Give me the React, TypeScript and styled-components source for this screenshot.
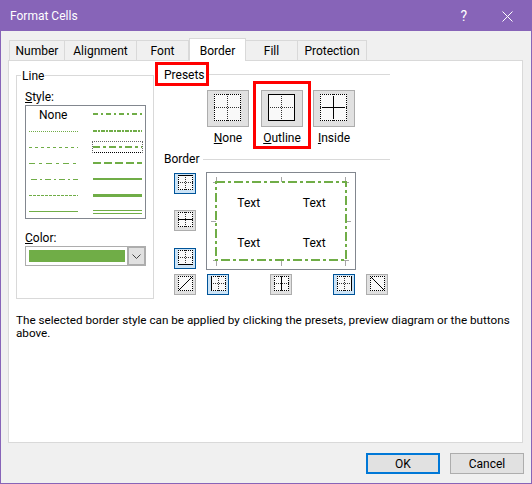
import type { ReactNode } from 'react'
import styled, { createGlobalStyle } from 'styled-components'

const GREEN = '#70ad47'

const Global = createGlobalStyle`
  html, body { margin: 0; padding: 0; background: #f0f0f0; }
  body { font-family: Roboto, "Noto Sans", sans-serif; font-size: 12px; color: #000; }
`

// a dash pattern per row of the style list: [pattern, thickness]
const leftLines: [string, number][] = [
  ['1 1', 1],
  ['3 3', 1],
  ['6 4 3 4', 1],
  ['6 3 2 3', 1],
  ['3 1', 1],
  ['', 1],
]
const rightLines: [string, number][] = [
  ['5 3 2 3', 2],
  ['4 1 2 1', 2],
  ['7 3 3 3', 2],
  ['8 3', 2],
  ['', 2],
  ['', 3],
]

const TABS = [
  { label: 'Number', width: 56 },
  { label: 'Alignment', width: 72 },
  { label: 'Font', width: 52 },
  { label: 'Border', width: 57, active: true },
  { label: 'Fill', width: 52 },
  { label: 'Protection', width: 69 },
]

const Under = ({ c }: { c: string }) => <u>{c}</u>

const LineSample = ({ dash, weight, inset = 0 }: { dash: string; weight: number; inset?: number }) => {
  const y = weight % 2 ? 3.5 : 3
  return (
    <svg width="49" height="6">
      <line x1={inset} y1={y} x2="49" y2={y} stroke={GREEN} strokeWidth={weight} strokeDasharray={dash} />
    </svg>
  )
}

// one pixel dots, every other pixel, so nothing gets smeared by dash rendering
const dotsAcross = (y: number, size: number) => {
  let d = ''
  for (let i = 0; i < size; i += 2) d += `M${i} ${y + 0.5}h1`
  return d
}
const dotsDown = (x: number, size: number) => {
  let d = ''
  for (let i = 0; i < size; i += 2) d += `M${x} ${i}h1v1h-1z`
  return d
}

// the little dotted cell picture on each border button; children are the solid strokes
const CellIcon = ({ size, plain, children }: { size: number; plain?: boolean; children?: ReactNode }) => {
  const last = size - 1
  const mid = Math.floor(size / 2)
  return (
    <svg width={size} height={size}>
      <rect x="0" y="0" width={size} height={size} fill="#f9f9f9" />
      <path d={dotsAcross(0, size) + dotsAcross(last, size)} stroke="#000" fill="none" />
      <path d={dotsDown(0, size) + dotsDown(last, size)} fill="#000" />
      {!plain && <path d={dotsAcross(mid, size)} stroke="#333" fill="none" />}
      {!plain && <path d={dotsDown(mid, size)} fill="#333" />}
      <g stroke="#000" strokeWidth="1" fill="none">
        {children}
      </g>
    </svg>
  )
}

const Tick = styled.i<{ $x: number; $y: number; $w: number; $h: number }>`
  position: absolute;
  left: ${p => p.$x}px;
  top: ${p => p.$y}px;
  width: ${p => p.$w}px;
  height: ${p => p.$h}px;
  background: #a6a6a6;
`

export default function App() {
  return (
    <Win>
      <Global />
      <TitleBar>
        <span>Format Cells</span>
        <TitleIcons>
          <HelpMark>?</HelpMark>
          <svg width="11" height="11">
            <path d="M0.5 0.5L10.5 10.5M10.5 0.5L0.5 10.5" stroke="#fff" fill="none" />
          </svg>
        </TitleIcons>
      </TitleBar>
      <Body>
        <Tabs>
          {TABS.map(t => (
            <Tab key={t.label} $active={t.active} $w={t.width}>
              {t.label}
            </Tab>
          ))}
        </Tabs>
        <Panel>
          <Columns>
            <LineGroup>
              <Legend>Line</Legend>
              <FieldLabel>
                <Under c="S" />tyle:
              </FieldLabel>
              <StyleList>
                <StyleColumn>
                  <NoneRow>None</NoneRow>
                  {leftLines.map(([d, w], i) => (
                    <StyleRow key={i}>
                      <LineSample dash={d} weight={w} inset={i === 3 ? 2 : 0} />
                    </StyleRow>
                  ))}
                </StyleColumn>
                <StyleColumn>
                  {rightLines.map(([d, w], i) => (
                    <StyleRow key={i} $selected={i === 2}>
                      <LineSample dash={d} weight={w} />
                    </StyleRow>
                  ))}
                  <StyleRow>
                    <DoubleLine />
                  </StyleRow>
                </StyleColumn>
              </StyleList>
              <ColorLabel>
                <Under c="C" />olor:
              </ColorLabel>
              <Combo>
                <Swatch />
                <ComboArrow>
                  <svg width="9" height="5">
                    <path d="M0.5 0.5L4.5 4.5L8.5 0.5" stroke="#444" fill="none" />
                  </svg>
                </ComboArrow>
              </Combo>
            </LineGroup>

            <RightSide>
              <Heading>
                <RedLabel>Presets</RedLabel>
                <Rule />
              </Heading>
              <Presets>
                <Preset>
                  <PresetButton>
                    <CellIcon size={27} />
                  </PresetButton>
                  <PresetName>
                    <Under c="N" />one
                  </PresetName>
                </Preset>
                <Preset $marked>
                  <PresetButton>
                    <CellIcon size={27}>
                      <rect x="0.5" y="0.5" width="26" height="26" />
                    </CellIcon>
                  </PresetButton>
                  <PresetName>
                    <Under c="O" />utline
                  </PresetName>
                </Preset>
                <Preset>
                  <PresetButton>
                    <CellIcon size={27}>
                      <path d="M13.5 2V25M2 13.5H25" />
                    </CellIcon>
                  </PresetButton>
                  <PresetName>
                    <Under c="I" />nside
                  </PresetName>
                </Preset>
              </Presets>
              <BorderHeading>
                <span>Border</span>
                <Rule />
              </BorderHeading>
              <BorderGrid>
                <SideButtons>
                  <EdgeButton $on>
                    <CellIcon size={15}>
                      <path d="M0 0.5H15" />
                    </CellIcon>
                  </EdgeButton>
                  <EdgeButton>
                    <CellIcon size={15}>
                      <path d="M1 7.5H14" />
                    </CellIcon>
                  </EdgeButton>
                  <EdgeButton $on>
                    <CellIcon size={15}>
                      <path d="M0 14.5H15" />
                    </CellIcon>
                  </EdgeButton>
                </SideButtons>
                <Preview>
                  <Tick $x={6} $y={9} $w={5} $h={1} />
                  <Tick $x={9} $y={4} $w={1} $h={5} />
                  <Tick $x={137} $y={9} $w={5} $h={1} />
                  <Tick $x={138} $y={4} $w={1} $h={5} />
                  <Tick $x={6} $y={87} $w={5} $h={1} />
                  <Tick $x={9} $y={88} $w={1} $h={5} />
                  <Tick $x={137} $y={87} $w={5} $h={1} />
                  <Tick $x={138} $y={88} $w={1} $h={5} />
                  <Tick $x={4} $y={48} $w={5} $h={1} />
                  <Tick $x={139} $y={48} $w={5} $h={1} />
                  <Tick $x={74} $y={4} $w={1} $h={5} />
                  <Tick $x={74} $y={88} $w={1} $h={5} />
                  <PreviewFrame>
                    <PreviewDash width="133" height="81">
                      <rect
                        x="1.5"
                        y="1.5"
                        width="130"
                        height="78"
                        fill="none"
                        stroke={GREEN}
                        strokeWidth="2"
                        strokeDasharray="9 3 3 3"
                        shapeRendering="crispEdges"
                      />
                    </PreviewDash>
                    <PreviewCell>Text</PreviewCell>
                    <PreviewCell>Text</PreviewCell>
                    <PreviewCell>Text</PreviewCell>
                    <PreviewCell>Text</PreviewCell>
                  </PreviewFrame>
                </Preview>
                <EdgeButton>
                  <CellIcon size={15} plain>
                    <path d="M0 15L15 0" />
                  </CellIcon>
                </EdgeButton>
                <BottomButtons>
                  <EdgeButton $on>
                    <CellIcon size={15}>
                      <path d="M0.5 0V15" />
                    </CellIcon>
                  </EdgeButton>
                  <EdgeButton>
                    <CellIcon size={15}>
                      <path d="M7.5 1V14" />
                    </CellIcon>
                  </EdgeButton>
                  <EdgeButton $on>
                    <CellIcon size={15}>
                      <path d="M14.5 0V15" />
                    </CellIcon>
                  </EdgeButton>
                  <EdgeButton>
                    <CellIcon size={15} plain>
                      <path d="M0 0L15 15" />
                    </CellIcon>
                  </EdgeButton>
                </BottomButtons>
              </BorderGrid>
            </RightSide>
          </Columns>
          <Hint>
            The selected border style can be applied by clicking the presets, preview diagram or the buttons above.
          </Hint>
        </Panel>
        <Footer>
          <DialogButton $primary>OK</DialogButton>
          <DialogButton>Cancel</DialogButton>
        </Footer>
      </Body>
    </Win>
  )
}

const Win = styled.div`
  width: 532px;
  height: 484px;
  box-sizing: border-box;
  border: 1px solid #8764b8;
  border-top: 0;
  display: flex;
  flex-direction: column;
  overflow: hidden;
`

const TitleBar = styled.div`
  height: 31px;
  flex: none;
  box-sizing: border-box;
  background: #8764b8;
  color: #fff;
  display: flex;
  align-items: center;
  justify-content: space-between;
  padding: 1px 18px 0 9px;
  font-size: 12px;
`

const TitleIcons = styled.div`
  display: flex;
  align-items: center;
  gap: 35px;
`

const HelpMark = styled.span`
  font-size: 14px;
`

const Body = styled.div`
  flex: 1;
  display: flex;
  flex-direction: column;
  padding: 7px 8px 0 7px;
  background: #f0f0f0;
`

const Tabs = styled.div`
  display: flex;
  align-items: flex-end;
  height: 22px;
  padding-left: 1px;
  position: relative;
  z-index: 1;
`

const Tab = styled.div<{ $active?: boolean; $w: number }>`
  box-sizing: border-box;
  width: ${p => p.$w}px;
  height: ${p => (p.$active ? 23 : 20)}px;
  margin-bottom: ${p => (p.$active ? -1 : 0)}px;
  background: ${p => (p.$active ? '#fff' : '#f0f0f0')};
  border: 1px solid #d9d9d9;
  border-bottom: 0;
  border-left-width: ${p => (p.$active ? 1 : 0)}px;
  display: flex;
  align-items: center;
  justify-content: center;
  padding-top: 1px;

  &:first-child {
    border-left-width: 1px;
  }
`

const Panel = styled.div`
  box-sizing: border-box;
  height: 383px;
  background: #fff;
  border: 1px solid #d9d9d9;
  padding: 14px 7px 0 7px;
`

const Columns = styled.div`
  display: flex;
  align-items: flex-start;
`

const LineGroup = styled.div`
  box-sizing: border-box;
  width: 138px;
  height: 224px;
  border: 1px solid #d9d9d9;
  position: relative;
  padding: 13px 7px 0 8px;
  flex: none;
`

const Legend = styled.span`
  position: absolute;
  top: -8px;
  left: 4px;
  padding: 0 1px;
  background: #fff;
  line-height: 16px;
`

const FieldLabel = styled.div`
  line-height: 16px;
`

const ColorLabel = styled(FieldLabel)`
  margin-top: 11px;
`

const StyleList = styled.div`
  box-sizing: border-box;
  width: 121px;
  height: 114px;
  border: 1px solid #82878f;
  display: grid;
  grid-template-columns: 64px 1fr;
  padding: 0 0 0 3px;
`

const StyleColumn = styled.div`
  display: flex;
  flex-direction: column;
  padding-top: 1px;
`

const NoneRow = styled.div`
  height: 16px;
  line-height: 16px;
  padding-left: 10px;
`

const StyleRow = styled.div<{ $selected?: boolean }>`
  height: 16px;
  width: 52px;
  margin-left: -1px;
  padding: 5px 0 0 1px;
  box-sizing: border-box;
  position: relative;
  svg {
    display: block;
  }
  &:first-child {
    padding-top: 4px;
  }
  &::after {
    content: ${p => (p.$selected ? '""' : 'none')};
    position: absolute;
    left: 0;
    right: 1px;
    top: 2px;
    height: 10px;
    border: 1px dotted #666;
    border-bottom: 1px dotted #000;
  }
`

const DoubleLine = styled.div`
  width: 49px;
  height: 4px;
  margin-top: 2px;
  box-sizing: border-box;
  border-top: 1px solid ${GREEN};
  border-bottom: 1px solid ${GREEN};
`

const Combo = styled.div`
  box-sizing: border-box;
  width: 121px;
  height: 20px;
  border: 1px solid #adadad;
  background: #fff;
  display: flex;
  align-items: center;
  justify-content: space-between;
  padding-left: 3px;
`

const Swatch = styled.div`
  width: 96px;
  height: 12px;
  background: ${GREEN};
`

const ComboArrow = styled.div`
  box-sizing: border-box;
  width: 18px;
  height: 18px;
  background: #e1e1e1;
  border: 2px solid #adadad;
  border-width: 1px 1px 1px 2px;
  display: flex;
  align-items: center;
  justify-content: center;
`

const RightSide = styled.div`
  flex: 1;
  padding-left: 1px;
  margin-top: -13px;
`

const Heading = styled.div`
  display: flex;
  align-items: center;
  width: 235px;
`

const RedLabel = styled.div`
  box-sizing: border-box;
  height: 24px;
  width: 54px;
  border: 3px solid #f00;
  display: flex;
  align-items: center;
  padding: 1px 0 0 6px;
  flex: none;
`

const Rule = styled.div`
  flex: 1;
  height: 1px;
  background: #d9d9d9;
`

const Presets = styled.div`
  display: flex;
  padding-left: 52px;
  margin-top: -5px;
`

const Preset = styled.div<{ $marked?: boolean }>`
  box-sizing: border-box;
  width: ${p => (p.$marked ? 58 : 42)}px;
  height: 68px;
  border-style: solid;
  border-color: ${p => (p.$marked ? '#f00' : 'transparent')};
  border-width: ${p => (p.$marked ? 3 : 0)}px;
  margin: 0 ${p => (p.$marked ? 2 : 0)}px 0 ${p => (p.$marked ? 4 : 0)}px;
  padding-top: ${p => (p.$marked ? 6 : 9)}px;
  display: flex;
  flex-direction: column;
  align-items: center;
`

const PresetButton = styled.div`
  box-sizing: border-box;
  width: 42px;
  height: 37px;
  flex: none;
  background: #e1e1e1;
  border: 1px solid #adadad;
  padding: 3px 0 0 6px;
  svg {
    display: block;
  }
`

const PresetName = styled.div`
  margin-top: 3px;
  line-height: 16px;
  white-space: nowrap;
`

const BorderHeading = styled.div`
  display: flex;
  align-items: center;
  gap: 4px;
  width: 226px;
  margin-left: 9px;
  margin-top: 2px;
  line-height: 16px;
`

const BorderGrid = styled.div`
  display: grid;
  grid-template-columns: 22px 150px;
  column-gap: 10px;
  grid-template-rows: 98px 22px;
  row-gap: 4px;
  margin-left: 19px;
  margin-top: 5px;
`

const SideButtons = styled.div`
  display: flex;
  flex-direction: column;
  gap: 16px;
  padding-top: 1px;

  & > :nth-child(3) {
    margin-top: 1px;
  }
`

const BottomButtons = styled.div`
  display: flex;
  gap: 41px;
  margin-left: 1px;

  & > :nth-child(4) {
    margin-left: -30px;
  }
`

const EdgeButton = styled.div<{ $on?: boolean }>`
  box-sizing: border-box;
  width: 22px;
  height: 21px;
  flex: none;
  background: ${p => (p.$on ? '#cce4f7' : '#e1e1e1')};
  border: 1px solid ${p => (p.$on ? '#005499' : '#adadad')};
  padding: 1px 0 0 3px;
  svg {
    display: block;
  }
`

const Preview = styled.div`
  box-sizing: border-box;
  width: 150px;
  height: 98px;
  border: 1px solid #82878f;
  position: relative;
`

const PreviewFrame = styled.div`
  position: absolute;
  left: 8px;
  top: 8px;
  width: 131px;
  height: 79px;
  display: grid;
  grid-template-columns: 1fr 1fr;
  grid-template-rows: 1fr 1fr;
`

const PreviewDash = styled.svg`
  position: absolute;
  left: -1px;
  top: -1px;
`

const PreviewCell = styled.div`
  display: flex;
  align-items: center;
  justify-content: center;
  padding: 5px 0 0 2px;
`

const Hint = styled.p`
  margin: 15px 0 0 0;
  width: 500px;
  font-size: 11.7px;
  line-height: 13px;
`

const Footer = styled.div`
  flex: 1;
  display: flex;
  justify-content: flex-end;
  align-items: flex-start;
  gap: 10px;
  padding-top: 10px;
  margin-right: -1px;
`

const DialogButton = styled.div<{ $primary?: boolean }>`
  box-sizing: border-box;
  width: 74px;
  height: 21px;
  background: #e1e1e1;
  border: ${p => (p.$primary ? '2px solid #0078d7' : '1px solid #adadad')};
  display: flex;
  align-items: center;
  justify-content: center;
`
